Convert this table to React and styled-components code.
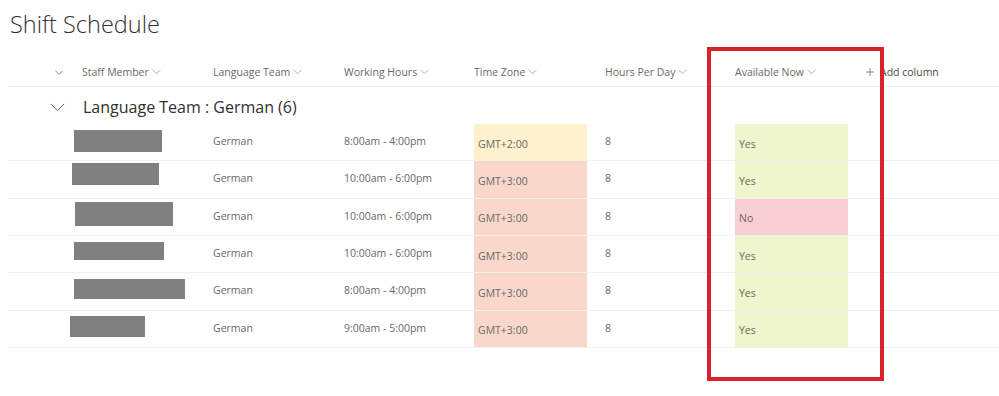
import React from "react";
import styled, { createGlobalStyle } from "styled-components";

const GlobalStyle = createGlobalStyle`
  html, body {
    margin: 0;
    padding: 0;
    background: #ffffff;
  }
  body {
    font-family: "Open Sans", "Noto Sans", sans-serif;
    color: #666666;
  }
`;

const cols = "58px 147px 131px 130px 131px 130px 131px 1fr";

const Page = styled.div`
  position: relative;
  width: 999px;
  height: 396px;
  overflow: hidden;
  padding-left: 8px;
  box-sizing: border-box;
`;

const Title = styled.h1`
  margin: 0 0 19px 2px;
  padding-top: 9px;
  font-size: 23.5px;
  line-height: 30px;
  font-weight: 300;
  color: #323130;
`;

const HeaderRow = styled.div`
  display: grid;
  grid-template-columns: ${cols};
  height: 28px;
  align-items: center;
  border-bottom: 1px solid #edebe9;
  font-size: 10.5px;
  color: #6a6866;
`;

const ExpandCell = styled.div`
  display: flex;
  justify-content: flex-end;
  padding-right: 3px;
`;

const HeaderCell = styled.div`
  display: flex;
  align-items: center;
  gap: 3px;
  padding-left: ${(p) => p.$pad || 0}px;
  white-space: nowrap;
`;

const AddCell = styled.div`
  display: flex;
  align-items: center;
  gap: 6px;
  white-space: nowrap;
  color: #4a4846;
`;

const GroupRow = styled.div`
  display: flex;
  align-items: center;
  height: 37px;
  padding-top: 3px;
  box-sizing: border-box;
  padding-left: 42px;
  gap: 18px;
  font-size: 16px;
  color: #323130;
`;

const Row = styled.div`
  display: grid;
  grid-template-columns: ${cols};
  height: 37.33px;
  box-sizing: border-box;
  border-bottom: 1px solid #f1f0ef;
  font-size: 10.5px;
  color: #6a6866;
`;

const Cell = styled.div`
  display: flex;
  align-items: ${(p) => (p.$fill ? "stretch" : "center")};
  white-space: nowrap;
  margin-top: ${(p) => (p.$fill ? 0 : -2)}px;
`;

const Tinted = styled.div`
  display: flex;
  align-items: center;
  width: 113px;
  padding: 3px 0 0 4px;
  box-sizing: border-box;
  background: ${(p) => p.$bg};
`;

const Redact = styled.div`
  align-self: flex-start;
  margin-top: ${(p) => p.$top}px;
  margin-left: ${(p) => p.$left}px;
  width: ${(p) => p.$w}px;
  height: ${(p) => p.$h}px;
  background: #808080;
`;

const Callout = styled.div`
  position: absolute;
  left: 707px;
  top: 47px;
  width: 177px;
  height: 334px;
  box-sizing: border-box;
  border: 4.5px solid #d8232a;
  pointer-events: none;
`;

const Chevron = ({ size = 9, color = "#b3b0ad" }) => (
  <svg width={size} height={size / 2 + 1} viewBox="0 0 18 10" fill="none">
    <path d="M1 1 L9 9 L17 1" stroke={color} strokeWidth={18 / size} />
  </svg>
);

const Plus = () => (
  <svg width="8" height="8" viewBox="0 0 8 8">
    <path d="M4 0 V8 M0 4 H8" stroke="#8a8886" strokeWidth="1" />
  </svg>
);

const yellow = "#fdf1cd";
const salmon = "#f9d8cb";
const green = "#eff6cd";
const pink = "#f9ced5";

const people = [
  { r: [8, 8, 88, 22], hours: "8:00am - 4:00pm", tz: "GMT+2:00", tzBg: yellow, avail: "Yes" },
  { r: [4, 6, 87, 22], hours: "10:00am - 6:00pm", tz: "GMT+3:00", tzBg: salmon, avail: "Yes" },
  { r: [5, 9, 98, 24], hours: "10:00am - 6:00pm", tz: "GMT+3:00", tzBg: salmon, avail: "No" },
  { r: [8, 8, 90, 18], hours: "10:00am - 6:00pm", tz: "GMT+3:00", tzBg: salmon, avail: "Yes" },
  { r: [8, 8, 111, 20], hours: "8:00am - 4:00pm", tz: "GMT+3:00", tzBg: salmon, avail: "Yes" },
  { r: [7, 4, 75, 21], hours: "9:00am - 5:00pm", tz: "GMT+3:00", tzBg: salmon, avail: "Yes" },
];

const headers = ["Language Team", "Working Hours", "Time Zone", "Hours Per Day", "Available Now"];

export default function App() {
  return (
    <Page>
      <GlobalStyle />
      <Title>Shift Schedule</Title>

      <HeaderRow>
        <ExpandCell>
          <Chevron size={8} color="#8a8886" />
        </ExpandCell>
        <HeaderCell $pad={16}>
          Staff Member <Chevron />
        </HeaderCell>
        {headers.map((h) => (
          <HeaderCell key={h}>
            {h} <Chevron />
          </HeaderCell>
        ))}
        <AddCell>
          <Plus />
          Add column
        </AddCell>
      </HeaderRow>

      <GroupRow>
        <Chevron size={15} color="#605e5c" />
        <span>Language Team : German (6)</span>
      </GroupRow>

      {people.map((p, i) => (
        <Row key={i}>
          <Cell />
          <Cell>
            <Redact $top={p.r[0]} $left={p.r[1]} $w={p.r[2]} $h={p.r[3]} />
          </Cell>
          <Cell>German</Cell>
          <Cell>{p.hours}</Cell>
          <Cell $fill>
            <Tinted $bg={p.tzBg}>{p.tz}</Tinted>
          </Cell>
          <Cell>8</Cell>
          <Cell $fill>
            <Tinted $bg={p.avail === "Yes" ? green : pink}>{p.avail}</Tinted>
          </Cell>
          <Cell />
        </Row>
      ))}

      <Callout />
    </Page>
  );
}
